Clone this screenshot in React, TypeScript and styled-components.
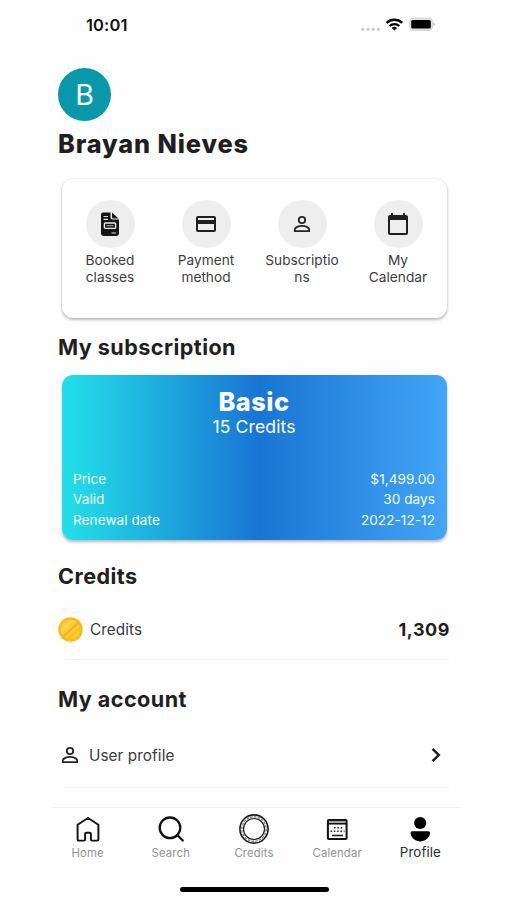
import React from 'react';
import styled, { createGlobalStyle } from 'styled-components';

const GlobalStyle = createGlobalStyle`
  * { box-sizing: border-box; }
  body { margin: 0; background: #fff; font-family: Inter, "Liberation Sans", sans-serif; color: #1f1f1f; }
  svg { display: block; flex: none; }
`;

const Screen = styled.div`
  width: 507px;
  height: 900px;
  padding: 0 45px 0 52px;
  display: flex;
  flex-direction: column;
  overflow: hidden;
  background: #fefefe;
`;

const StatusBar = styled.header`
  height: 49px;
  padding: 0 24px 0 34px;
  display: flex;
  align-items: center;
  justify-content: space-between;
`;

const Clock = styled.time`
  font-size: 16.5px;
  font-weight: 600;
  letter-spacing: 0.1px;
  color: #111;
`;

const Main = styled.main`
  height: 758px;
  padding: 19px 13px 0 6px;
  display: flex;
  flex-direction: column;
`;

const Avatar = styled.div`
  width: 53px;
  height: 53px;
  flex: none;
  border-radius: 50%;
  background: #0799aa;
  color: #fff;
  display: flex;
  align-items: center;
  justify-content: center;
  font-size: 28.5px;
`;

const UserName = styled.h1`
  margin: 7px 0 0;
  height: 32px;
  line-height: 32px;
  font-size: 25.3px;
  font-weight: 800;
  letter-spacing: 0.9px;
  white-space: nowrap;
`;

const SectionTitle = styled.h2<{ $gap: number }>`
  margin: ${({ $gap }) => $gap}px 0 0;
  height: 28px;
  line-height: 28px;
  font-size: 21.6px;
  font-weight: 700;
  letter-spacing: 0.45px;
  white-space: nowrap;
`;

const ShortcutCard = styled.nav`
  margin: 19px 2px 0 4px;
  height: 139px;
  flex: none;
  padding: 21px 1px 0 0;
  border-radius: 11px;
  background: #fff;
  box-shadow: 0 2px 3px rgba(0, 0, 0, 0.25), 0 0 2px rgba(0, 0, 0, 0.14);
  display: grid;
  grid-template-columns: repeat(4, 1fr);
`;

const Shortcut = styled.div`
  display: flex;
  flex-direction: column;
  align-items: center;
`;

const IconDisc = styled.div`
  width: 49px;
  height: 48px;
  border-radius: 50%;
  background: #eee;
  display: flex;
  align-items: center;
  justify-content: center;
`;

const ShortcutLabel = styled.span`
  margin-top: 4px;
  width: 78px;
  font-size: 13.7px;
  line-height: 16.5px;
  text-align: center;
  overflow-wrap: anywhere;
  color: #3c3c3e;
`;

const PlanCard = styled.section`
  margin: 14px 2px 0 4px;
  height: 165px;
  flex: none;
  padding: 12px 12px 10px 11px;
  border-radius: 11px;
  color: #fff;
  background: linear-gradient(90deg, #22dde8 2%, #1975d4 51%, #42a5f5 100%);
  box-shadow: 0 2px 3px rgba(0, 0, 0, 0.28);
  display: flex;
  flex-direction: column;
`;

const PlanName = styled.div`
  height: 30px;
  line-height: 30px;
  text-align: center;
  font-size: 25.4px;
  font-weight: 800;
  letter-spacing: 0.5px;
`;

const PlanCredits = styled.div`
  height: 20px;
  line-height: 20px;
  text-align: center;
  font-size: 17.6px;
  letter-spacing: 0.1px;
`;

const PlanDetails = styled.div`
  margin-top: auto;
`;

const PlanRow = styled.div`
  display: flex;
  justify-content: space-between;
  height: 20.4px;
  line-height: 20.4px;
  font-size: 13.6px;
  letter-spacing: 0.05px;
`;

const PlanCell = styled.span`
  color: #f3fbff;
`;

const ListRow = styled.div<{ $height: number; $right: number }>`
  height: ${({ $height }) => $height}px;
  padding: 10px ${({ $right }) => $right}px 0 0;
  display: flex;
  align-items: center;
`;

const RowLabel = styled.span<{ $gap: number }>`
  margin-left: ${({ $gap }) => $gap}px;
  flex: 1;
  font-size: 15.3px;
  letter-spacing: 0.08px;
  color: #3a3a3c;
`;

const Amount = styled.strong`
  margin-right: -1px;
  font-size: 18px;
  font-weight: 700;
  letter-spacing: 0.55px;
`;

const Divider = styled.div`
  height: 1px;
  flex: none;
  margin: 0 0 0 6px;
  background: #f2f2f2;
`;

const TabBar = styled.nav`
  height: 60px;
  width: 409px;
  padding-right: 5px;
  border-top: 1px solid #f2f2f2;
  display: flex;
  justify-content: center;
`;

const Tab = styled.div<{ $active?: boolean }>`
  width: 83.2px;
  flex: none;
  display: flex;
  flex-direction: column;
  align-items: center;
  font-size: ${({ $active }) => ($active ? 13.3 : 11.3)}px;
  letter-spacing: ${({ $active }) => ($active ? 0.1 : 0.15)}px;
  color: ${({ $active }) => ($active ? '#2c2c2e' : '#929292')};
`;

const TabIcon = styled.div`
  height: 36px;
  padding-top: 6px;
`;

const TabLabel = styled.span<{ $active?: boolean }>`
  margin-top: ${({ $active }) => ($active ? 0 : 1)}px;
  line-height: 17px;
`;

const HomeIndicator = styled.div`
  width: 149px;
  height: 5px;
  margin: 20px 0 0 128px;
  border-radius: 3px;
  background: #000;
`;

const StatusIcons = () => (
  <svg width="80" height="18" viewBox="0 0 80 18">
    {[4.8, 10, 15.2, 20.4].map((x) => (
      <circle key={x} cx={x} cy="13.2" r="1.5" fill="#c4c4c4" />
    ))}
    <g fill="none" stroke="#000" strokeWidth="2.3">
      <path d="M28.6 6.800a11.500 11.500 0 0 1 15.600 0" />
      <path d="M31.500 10a7.200 7.200 0 0 1 9.800 0" />
    </g>
    <path d="M33.700 11.900a4 4 0 0 1 5.400 0L36.400 14.500z" />
    <rect x="51.700" y="2.200" width="22.600" height="12.200" rx="3.400" fill="#e2e2e2" stroke="#cfcfcf" />
    <rect x="53.200" y="4" width="19.600" height="8.600" rx="1.600" />
    <path d="M75.500 6.500v3.600q1.300-.5 1.300-1.800t-1.300-1.800" fill="#aaa" />
  </svg>
);

const BookedIcon = () => (
  <svg width="20" height="25" viewBox="0 0 20 25">
    <path fill="#151515" d="M3 .5h7.500v5q0 2 2 2H19V21q0 3-3 3H4q-3 0-3-3V2.500Q1 .5 3 .5z" />
    <path fill="#151515" d="M12 .5l6.500 6H13.500q-1.500 0-1.500-1.500z" />
    <path stroke="#ddd" strokeWidth="1.200" d="M3.500 4.500h4.500M3.500 7.300h4.500M11.500 21H16" />
    <rect x="4.400" y="11" width="11.200" height="5.400" rx="1" fill="none" stroke="#eee" strokeWidth="1.400" />
    <path stroke="#999" strokeWidth="1.200" d="M6.500 13.700h7" />
  </svg>
);

const CardIcon = () => (
  <svg width="24" height="24" viewBox="0 0 24 24" fill="#202020">
    <path d="M20 4H4c-1.110 0-1.990.890-1.990 2L2 18c0 1.110.890 2 2 2h16c1.110 0 2-.890 2-2V6c0-1.110-.890-2-2-2zm0 14H4v-6h16v6zm0-10H4V6h16v2z" />
  </svg>
);

const PersonIcon = () => (
  <svg width="24" height="24" viewBox="0 0 24 24" fill="none" stroke="#252525" strokeWidth="1.800">
    <circle cx="12" cy="8" r="3.200" />
    <path strokeLinejoin="round" d="M4.800 19.200v-1.700c0-2.200 4-3.700 7.200-3.700s7.200 1.500 7.200 3.700v1.700z" />
  </svg>
);

const CalendarIcon = () => (
  <svg width="24" height="24" viewBox="0 0 24 24">
    <path fill="#202020" d="M20 3h-1V1h-2v2H7V1H5v2H4c-1.100 0-2 .900-2 2v16c0 1.100.900 2 2 2h16c1.100 0 2-.900 2-2V5c0-1.100-.900-2-2-2zm0 18H4V8h16v13z" />
  </svg>
);

const CoinIcon = () => (
  <svg width="25" height="25" viewBox="0 0 25 25">
    <defs>
      <clipPath id="coin"><circle cx="12.500" cy="12.500" r="10" /></clipPath>
    </defs>
    <circle cx="12.500" cy="12.500" r="12.200" fill="#f8bb15" />
    <circle cx="12.500" cy="12.500" r="10" fill="#fbcb3a" />
    <g clipPath="url(#coin)">
      <path d="M4 21L22 4" stroke="#f4b513" strokeWidth="2" />
      <path d="M0 17L17 0" stroke="#fcd452" strokeWidth="3" />
      <path d="M8 24L25 8" stroke="#f6bd1d" strokeWidth="2" />
    </g>
    <circle cx="12.500" cy="12.500" r="10" fill="none" stroke="#f6b918" strokeWidth=".600" />
  </svg>
);

const Chevron = () => (
  <svg width="12" height="16" viewBox="0 0 12 16" fill="none" stroke="#1c1c1e" strokeWidth="2.400">
    <path d="M2.500 1.800L8.800 8l-6.300 6.200" />
  </svg>
);

const HomeIcon = () => (
  <svg width="30" height="30" viewBox="0 0 30 30" fill="none" stroke="#111" strokeWidth="1.900" strokeLinejoin="round">
    <path d="M4.600 10.800L15 4l10.400 6.800v14.500q0 1.300-1.300 1.300h-5q-1.200 0-1.200-1.200v-5.400q0-1.200-1.200-1.200h-3.400q-1.200 0-1.200 1.200v5.400q0 1.200-1.200 1.200h-5q-1.300 0-1.300-1.300z" />
  </svg>
);

const SearchIcon = () => (
  <svg width="30" height="30" viewBox="0 0 30 30" fill="none" stroke="#111" strokeWidth="2.300" strokeLinecap="round">
    <circle cx="14" cy="13.800" r="10.300" />
    <path d="M21.500 21.200l5.300 5.300" />
  </svg>
);

const TokenIcon = () => (
  <svg width="30" height="30" viewBox="0 0 30 30" fill="none" stroke="#1a1a1a">
    <circle cx="15" cy="15" r="14.100" strokeWidth="1.600" />
    <circle cx="15" cy="15" r="12.200" strokeWidth="1.500" stroke="#888" strokeDasharray="2.600 1.200" />
    <circle cx="15" cy="15" r="10.500" strokeWidth="1.200" />
  </svg>
);

const CalendarTabIcon = () => (
  <svg width="30" height="30" viewBox="0 0 30 30">
    <rect x="5.900" y="5.900" width="18.700" height="19" rx="1" fill="none" stroke="#111" strokeWidth="2" />
    <path stroke="#111" strokeWidth="1.900" d="M6 9.600h18.500" />
    <path stroke="#888" strokeWidth=".900" d="M7 7.400h16.500" />
    <path stroke="#222" strokeWidth="1.500" strokeDasharray="1.500 1.800" d="M12 13.700h10M8.500 17.200h14" />
    <path stroke="#222" strokeWidth="1.600" d="M10 21.500h11" />
  </svg>
);

const ProfileTabIcon = () => (
  <svg width="30" height="30" viewBox="0 0 30 30">
    <circle cx="15.200" cy="9" r="6.100" />
    <path d="M7.300 17.300h16q2.100 0 1.700 2.200c-.8 5-5.500 7.900-9.700 7.900S6.300 24.500 5.600 19.500q-.4-2.200 1.700-2.200z" />
  </svg>
);

const shortcuts = [
  { label: 'Booked classes', Icon: BookedIcon },
  { label: 'Payment method', Icon: CardIcon },
  { label: 'Subscriptions', Icon: PersonIcon },
  { label: 'My Calendar', Icon: CalendarIcon },
];

const details = [
  ['Price', '$1,499.00'],
  ['Valid', '30 days'],
  ['Renewal date', '2022-12-12'],
];

const tabs = [
  { label: 'Home', Icon: HomeIcon },
  { label: 'Search', Icon: SearchIcon },
  { label: 'Credits', Icon: TokenIcon },
  { label: 'Calendar', Icon: CalendarTabIcon },
  { label: 'Profile', Icon: ProfileTabIcon, active: true },
];

export default function App() {
  return (
    <>
      <GlobalStyle />
      <Screen>
        <StatusBar>
          <Clock>10:01</Clock>
          <StatusIcons />
        </StatusBar>
        <Main>
          <Avatar>B</Avatar>
          <UserName>Brayan Nieves</UserName>
          <ShortcutCard>
            {shortcuts.map(({ label, Icon }) => (
              <Shortcut key={label}>
                <IconDisc><Icon /></IconDisc>
                <ShortcutLabel>{label}</ShortcutLabel>
              </Shortcut>
            ))}
          </ShortcutCard>
          <SectionTitle $gap={15}>My subscription</SectionTitle>
          <PlanCard>
            <PlanName>Basic</PlanName>
            <PlanCredits>15 Credits</PlanCredits>
            <PlanDetails>
              {details.map(([name, value]) => (
                <PlanRow key={name}>
                  <PlanCell>{name}</PlanCell>
                  <PlanCell>{value}</PlanCell>
                </PlanRow>
              ))}
            </PlanDetails>
          </PlanCard>
          <SectionTitle $gap={22}>Credits</SectionTitle>
          <ListRow $height={69} $right={0}>
            <CoinIcon />
            <RowLabel $gap={7}>Credits</RowLabel>
            <Amount>1,309</Amount>
          </ListRow>
          <Divider />
          <SectionTitle $gap={25}>My account</SectionTitle>
          <ListRow $height={74} $right={7}>
            <PersonIcon />
            <RowLabel $gap={7}>User profile</RowLabel>
            <Chevron />
          </ListRow>
          <Divider />
        </Main>
        <TabBar>
          {tabs.map(({ label, Icon, active }) => (
            <Tab key={label} $active={active}>
              <TabIcon><Icon /></TabIcon>
              <TabLabel $active={active}>{label}</TabLabel>
            </Tab>
          ))}
        </TabBar>
        <HomeIndicator />
      </Screen>
    </>
  );
}
